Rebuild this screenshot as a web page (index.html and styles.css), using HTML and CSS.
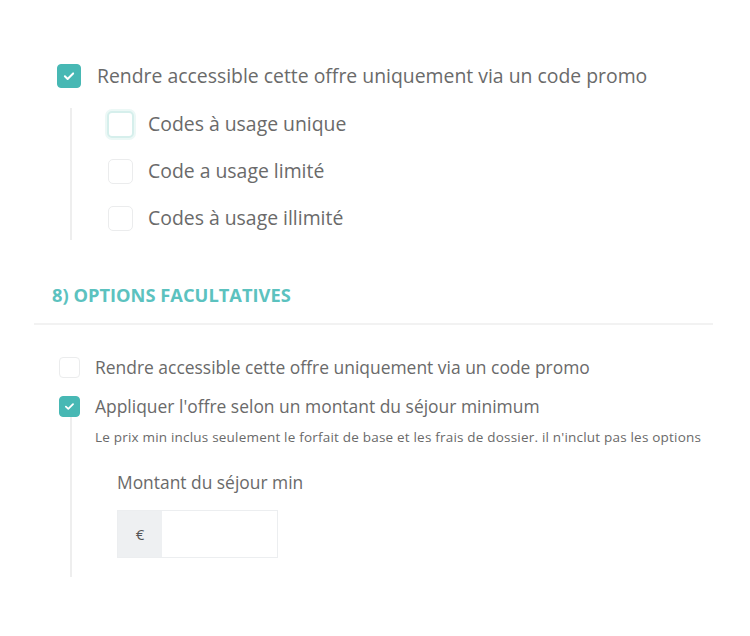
FILE: index.html
```html
<!DOCTYPE html>
<html lang="fr">
<head>
<meta charset="utf-8">
<link rel="stylesheet" href="styles.css">
</head>
<body>
<div class="page">
  <section class="block-a">
    <label class="row row-a">
      <span class="box box-a checked"><svg viewBox="0 0 24 24" width="24" height="24"><path d="M7.5 12.3l3 2.9 6-6" fill="none" stroke="#fff" stroke-width="2.2" stroke-linecap="round" stroke-linejoin="round"/></svg></span>
      <span class="label-a">Rendre accessible cette offre uniquement via un code promo</span>
    </label>
    <div class="sub sub-a">
      <label class="row row-sub">
        <span class="box box-sub focused"></span>
        <span class="label-a">Codes à usage unique</span>
      </label>
      <label class="row row-sub">
        <span class="box box-sub"></span>
        <span class="label-a">Code a usage limité</span>
      </label>
      <label class="row row-sub">
        <span class="box box-sub"></span>
        <span class="label-a">Codes à usage illimité</span>
      </label>
    </div>
  </section>

  <h2 class="heading">8) OPTIONS FACULTATIVES</h2>
  <hr class="divider">

  <section class="block-b">
    <label class="row row-b">
      <span class="box box-b"></span>
      <span class="label-b">Rendre accessible cette offre uniquement via un code promo</span>
    </label>
    <label class="row row-b row-b2">
      <span class="box box-b checked"><svg viewBox="0 0 22 22" width="21" height="21"><path d="M6.8 11.2l2.8 2.6 5.5-5.5" fill="none" stroke="#fff" stroke-width="2.1" stroke-linecap="round" stroke-linejoin="round"/></svg></span>
      <span class="label-b">Appliquer l'offre selon un montant du séjour minimum</span>
    </label>
    <div class="sub sub-b">
      <p class="hint">Le prix min inclus seulement le forfait de base et les frais de dossier. il n'inclut pas les options</p>
      <div class="field">
        <div class="field-label">Montant du séjour min</div>
        <div class="input-group">
          <span class="addon">€</span>
          <span class="input"></span>
        </div>
      </div>
    </div>
  </section>
</div>
</body>
</html>
```

FILE: styles.css
```css
* { box-sizing: border-box; }
html, body { margin: 0; padding: 0; background: #fff; }
body {
  font-family: "Open Sans", "Noto Sans", sans-serif;
  color: #6a6a6a;
  width: 750px;
  height: 636px;
  overflow: hidden;
}
.page { padding-top: 64px; }

.row { display: flex; align-items: center; }
.box {
  flex: none;
  display: flex;
  align-items: center;
  justify-content: center;
  background: #fff;
  border: 1px solid #e6e8ea;
  border-radius: 4px;
}
.box.checked { background: #47b8b4; border-color: #47b8b4; }

.block-a { padding-left: 57px; }
.row-a { height: 24px; }
.box-a { width: 24px; height: 24px; }
.label-a { font-size: 19.4px; margin-left: 16px; line-height: 24px; color: #6a6a6a; }

.sub { border-left: 2px solid #eeeeee; }
.sub-a {
  margin-left: 13px;
  margin-top: 20px;
  padding-left: 36px;
  padding-top: 4px;
  height: 132px;
}
.row-sub { height: 24px; margin-bottom: 23px; }
.box-sub { width: 25px; height: 25px; border-color: #ebeced; border-radius: 5px; }
.box-sub.focused {
  border: 2px solid #d6efec;
  box-shadow: 0 0 0 2px #ecf8f6;
  width: 27px; height: 27px;
  margin-left: -1px;
}
.row-sub .label-a { margin-left: 15px; }
.row-sub .box-sub.focused + .label-a { margin-left: 14px; }

.heading {
  margin: 43px 0 0 52px;
  font-size: 18.3px;
  font-weight: 700;
  color: #5cc2bf;
  line-height: 24px;
  letter-spacing: 0;
}
.divider {
  margin: 16px 0 0 34px;
  width: 679px;
  border: 0;
  border-top: 2px solid #f2f2f2;
  height: 0;
}

.block-b { padding-left: 59px; padding-top: 32px; }
.row-b { height: 21px; }
.box-b { width: 21px; height: 21px; border-color: #ebeced; }
.label-b { font-size: 17.45px; margin-left: 15px; line-height: 21px; }
.row-b2 { margin-top: 18px; }
.sub-b {
  margin-left: 11px;
  padding-left: 23px;
  padding-top: 12px;
  height: 160px;
}
.hint { margin: 0; font-size: 13.5px; letter-spacing: 0.2px; line-height: 16px; color: #6a6a6a; }
.field { padding-left: 22px; margin-top: 26px; }
.field-label { font-size: 17.4px; line-height: 22px; }
.input-group {
  display: flex;
  margin-top: 17px;
  width: 161px;
  height: 48px;
  border: 1px solid #eceef0;
}
.addon {
  flex: none;
  width: 44px;
  background: #eef0f2;
  display: flex;
  align-items: center;
  justify-content: center;
  font-size: 15px;
  color: #555;
}
.input { flex: 1; background: #fff; }
```
